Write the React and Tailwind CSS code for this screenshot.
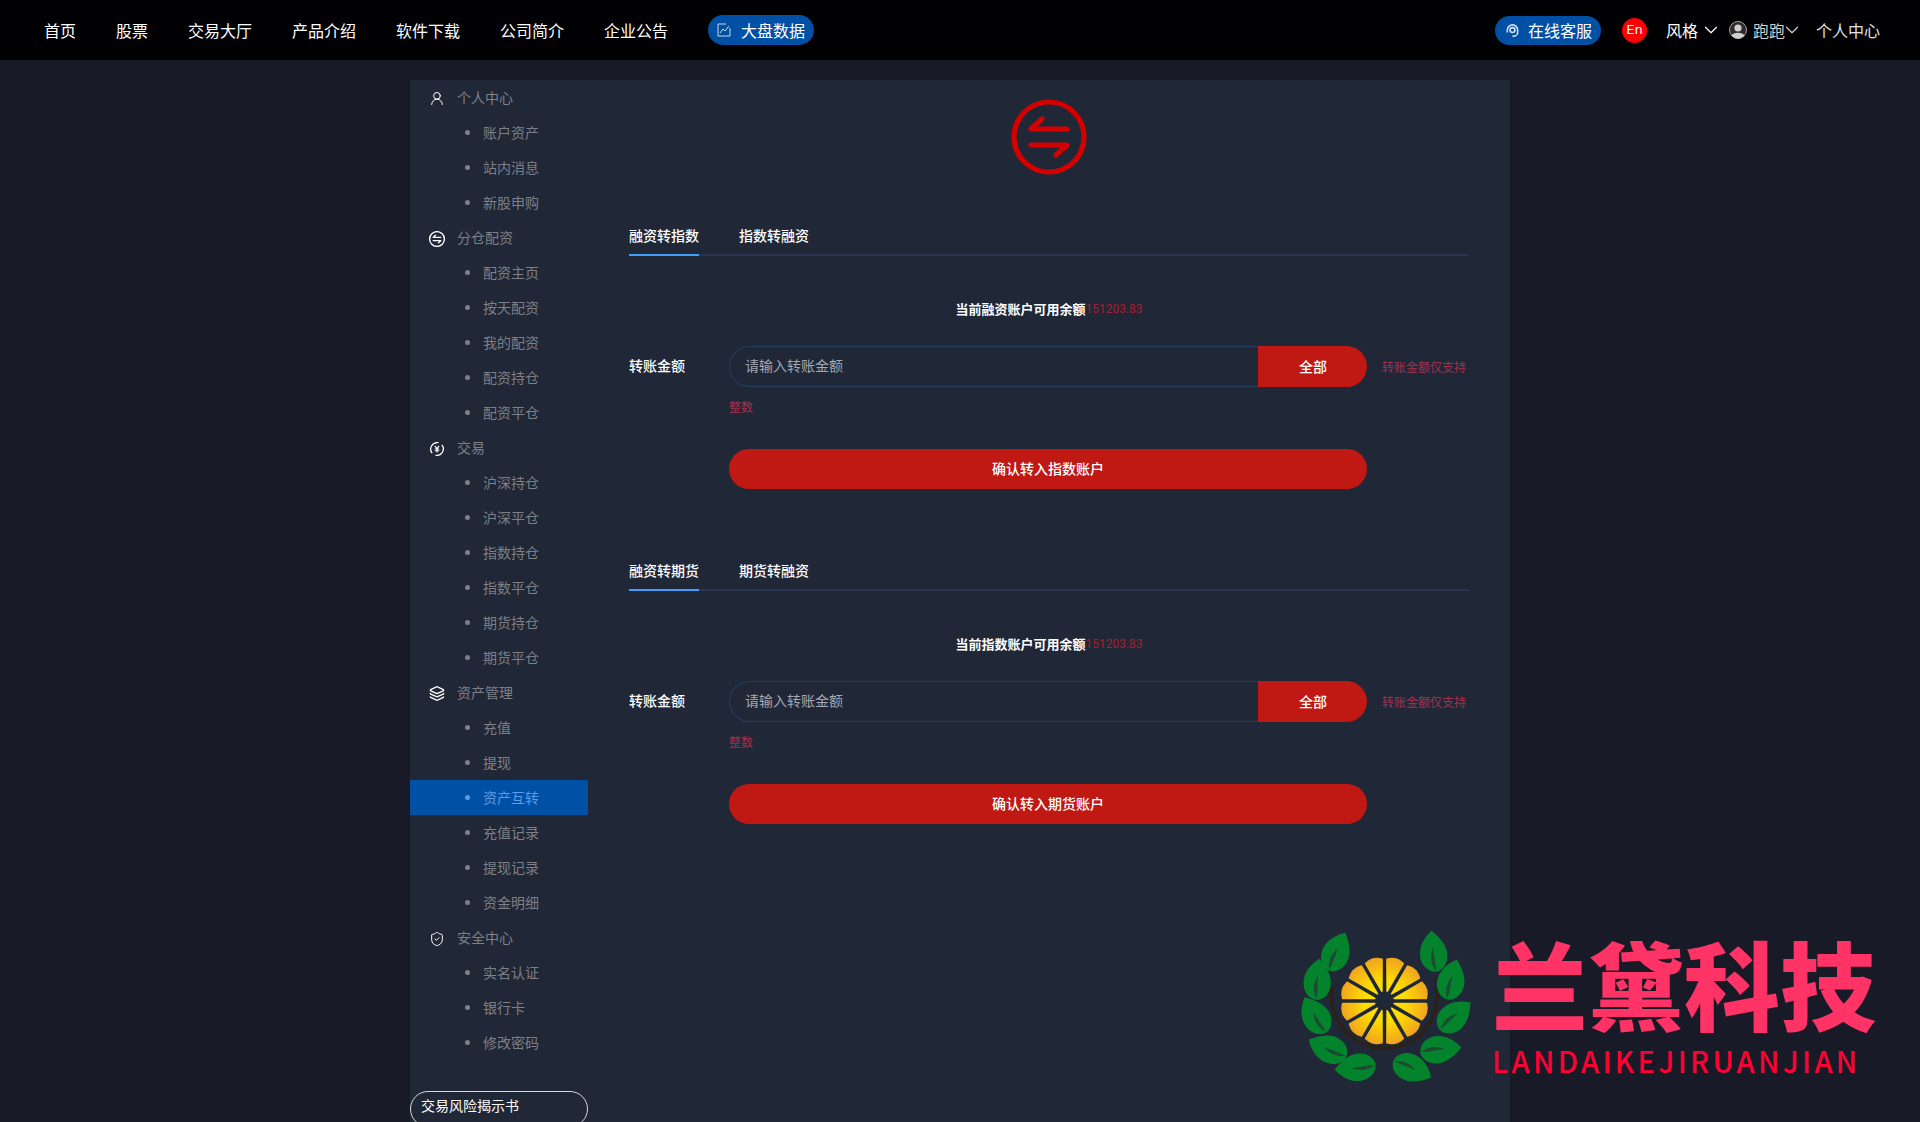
import { ChevronDown, Layers, ShieldCheck, UserRound } from 'lucide-react'

const NAV = ['首页', '股票', '交易大厅', '产品介绍', '软件下载', '公司简介', '企业公告']

const SwapIcon = ({ className = '', strokeWidth = 2 }) => (
  <svg viewBox="0 0 76 76" fill="none" stroke="currentColor" strokeLinecap="round" strokeLinejoin="round" className={className}>
    <circle cx="38" cy="38" r="35" strokeWidth={strokeWidth * 2.6} />
    <path d="M31 20 L20 30 H56 M20 46 H56 L45 56" strokeWidth={strokeWidth * 2.6} />
  </svg>
)

const YenIcon = () => (
  <svg viewBox="0 0 16 16" fill="none" stroke="currentColor" strokeWidth="1.3" className="w-4 h-4">
    <path d="M3.2 12.2 A6.5 6.5 0 0 1 9.5 1.7 M12.8 3.8 A6.5 6.5 0 0 1 6.5 14.3" />
    <path d="M5.8 4.8 L8 7.6 L10.2 4.8 M8 7.6 V11.6 M5.8 8 H10.2 M5.8 9.8 H10.2" strokeWidth="1.1" />
  </svg>
)

const SIDEBAR = [
  { title: '个人中心', icon: <UserRound size={17} strokeWidth={1.5} />, items: ['账户资产', '站内消息', '新股申购'] },
  { title: '分仓配资', icon: <SwapIcon className="w-4 h-4" strokeWidth={2.4} />, items: ['配资主页', '按天配资', '我的配资', '配资持仓', '配资平仓'] },
  { title: '交易', icon: <YenIcon />, items: ['沪深持仓', '沪深平仓', '指数持仓', '指数平仓', '期货持仓', '期货平仓'] },
  { title: '资产管理', icon: <Layers size={17} strokeWidth={2} />, items: ['充值', '提现', '资产互转', '充值记录', '提现记录', '资金明细'] },
  { title: '安全中心', icon: <ShieldCheck size={16} strokeWidth={1.5} />, items: ['实名认证', '银行卡', '修改密码'] },
]

const LEAVES = [
  [37, 20, 15], [18, 48, -5], [16, 84, -40], [29, 117, -75], [57, 136, -105],
  [134, 20, -15], [152, 48, 5], [155, 84, 40], [141, 117, 75], [113, 136, 105],
]

const Logo = () => (
  <svg viewBox="0 0 171 149" className="w-[171px] h-[149px] shrink-0 overflow-visible">
    <defs>
      <radialGradient id="orange" gradientUnits="userSpaceOnUse" cx="0" cy="0" r="45">
        <stop offset="0.45" stopColor="#ffdd00" />
        <stop offset="1" stopColor="#efa122" />
      </radialGradient>
    </defs>
    <path d="M33 56 A53 53 0 1 0 138 56" fill="none" stroke="#2d2018" strokeWidth="3.5" />
    {LEAVES.map(([x, y, r]) => (
      <g key={`${x}-${y}`} transform={`translate(${x} ${y}) rotate(${r}) scale(1.05)`}>
        <path d="M4 -20 C-8 -14 -14 -4 -13 6 C-12 14 -6 19 0 19 C8 18 13 10 13 2 C13 -7 8 -14 4 -20 Z" fill="#03842c" />
        <path d="M1 -4 C0 4 0 11 -2 18 C-5 10 -4 3 1 -4 Z" fill="#1c4a33" />
      </g>
    ))}
    <g transform="translate(85.5 69)">
      {[...Array(12)].map((_, i) => (
        <path
          key={i}
          transform={`rotate(${15 + i * 30})`}
          d="M0 -10 L-8.5 -41 Q0 -46 8.5 -41 Z"
          fill="url(#orange)"
          stroke="url(#orange)"
          strokeWidth="1.5"
          strokeLinejoin="round"
        />
      ))}
    </g>
  </svg>
)

const Watermark = () => (
  <div className="absolute left-[1299px] top-[932px] flex items-start gap-[22px]">
    <Logo />
    <div className="flex flex-col pt-[5px]">
      <div className="text-[96px] leading-[90px] font-black text-[#ff3366] whitespace-nowrap">兰黛科技</div>
      <div className="mt-[15px] text-[29px] leading-[36px] font-medium tracking-[3.4px] text-[#ff0033] whitespace-nowrap">LANDAIKEJIRUANJIAN</div>
    </div>
  </div>
)

const Transfer = ({ tabs, balanceLabel, submitLabel }) => (
  <section className="mb-[62px]">
    <div className="flex gap-[40px] h-[40px] border-b-2 border-[#2a3552] text-sm font-medium text-white">
      <div className="h-[40px] border-b-2 border-[#409eff] pt-[9px] leading-[20px]">{tabs[0]}</div>
      <div className="pt-[9px] leading-[20px]">{tabs[1]}</div>
    </div>

    <div className="mt-[43px] h-[20px] flex items-center justify-center text-[13px] font-bold text-white">
      {balanceLabel}
      <span className="text-xs font-normal text-[#a3202f] font-['Roboto',sans-serif]">151203.83</span>
    </div>

    <div className="mt-[27px] flex items-center">
      <span className="w-[100px] pb-[3px] text-sm font-medium text-white">转账金额</span>
      <div className="w-[638px] h-[41px] flex">
        <input
          readOnly
          placeholder="请输入转账金额"
          className="flex-1 min-w-0 pl-[15px] pb-[3px] rounded-l-full border border-r-0 border-[#24405f] bg-transparent text-sm outline-none placeholder:text-[#a4a9b3]"
        />
        <button className="w-[109px] pb-[2px] pl-px rounded-r-full bg-[#c01813] text-sm font-medium text-white">全部</button>
      </div>
      <span className="ml-[15px] text-xs text-[#a5324f]">转账金额仅支持</span>
    </div>

    <div className="mt-[12px] ml-[100px] h-[16px] leading-[16px] text-xs text-[#a5324f]">整数</div>

    <button className="mt-[34px] ml-[100px] w-[638px] h-[40px] pb-[2px] rounded-full bg-[#c01813] text-sm font-medium text-white">{submitLabel}</button>
  </section>
)

export default function App() {
  return (
    <div className="relative h-[1122px] overflow-hidden bg-[#181b27] font-['Noto_Sans_CJK_SC','Noto_Sans',sans-serif]">
      <header className="h-[60px] bg-[#010103] flex items-center pl-[44px] pr-[40px] text-white text-base">
        <nav className="flex items-center gap-[40px]">
          {NAV.map((n) => <a key={n}>{n}</a>)}
        </nav>
        <div className="ml-[40px] h-[30px] w-[106px] rounded-full bg-[#0050a5] flex items-center pl-[9px] gap-[10px]">
          <svg viewBox="0 0 14 14" fill="none" stroke="currentColor" strokeWidth="1" className="w-[14px] h-[14px] text-[#c8d6e8]">
            <path d="M9 1 H1 V13 H13 V5 M3 10 L6 6 L8 8 L12 3" />
          </svg>
          大盘数据
        </div>

        <div className="ml-auto flex items-center">
          <div className="h-[29px] w-[106px] rounded-full bg-[#0050a5] flex items-center pl-[10px] gap-[8px]">
            <svg viewBox="0 0 16 16" fill="none" stroke="currentColor" strokeWidth="1.7" className="w-[15px] h-[15px] text-[#d5e0ee]">
              <path d="M2.5 10 V7.5 A5.5 5.5 0 0 1 13.5 7.5 V10 M13.5 10 A4 4 0 0 1 9.5 14 H8" />
              <circle cx="8" cy="7.5" r="2.6" />
            </svg>
            在线客服
          </div>
          <div className="ml-[21px] w-[25px] h-[25px] rounded-full bg-[#ff0000] flex items-center justify-center text-[13px] font-['DejaVu_Sans',sans-serif]">En</div>
          <span className="ml-[19px]">风格</span>
          <ChevronDown size={22} strokeWidth={1.3} className="ml-[2px]" />
          <svg viewBox="0 0 18 18" className="ml-[7px] w-[18px] h-[18px]">
            <circle cx="9" cy="9" r="8.5" fill="#2c2c2c" stroke="#a99" strokeWidth="1" />
            <circle cx="9" cy="7" r="3.6" fill="#cfcfcf" />
            <path d="M2.6 14.5 C4 10.8 14 10.8 15.4 14.5 A8 8 0 0 1 2.6 14.5 Z" fill="#cfcfcf" />
          </svg>
          <span className="ml-[6px] text-[#cfcfcf]">跑跑</span>
          <ChevronDown size={22} strokeWidth={1.3} className="-ml-[4px] text-[#cfcfcf]" />
          <span className="ml-[13px] text-[#e2e2e2]">个人中心</span>
        </div>
      </header>

      <main className="mt-[20px] mx-auto w-[1100px] h-[1042px] bg-[#202737] flex">
        <aside className="w-[178px] shrink-0">
          {SIDEBAR.map((group) => (
            <div key={group.title}>
              <div className="h-[35px] flex items-center pl-[19px] gap-[12px] text-sm text-[#7d8087]">
                <span className="w-[16px] h-[16px] mt-[2px] flex items-center justify-center text-white">{group.icon}</span>
                <span className="pb-[2px]">{group.title}</span>
              </div>
              {group.items.map((item) => {
                const active = item === '资产互转'
                return (
                  <div
                    key={item}
                    className={`h-[35px] flex items-center pl-[55px] text-sm ${active ? 'bg-[#0050a5] text-[#5c9ce6]' : 'text-[#7d8087]'}`}
                  >
                    <span className={`w-[5px] h-[5px] rounded-full mr-[13px] ${active ? 'bg-[#5c9ce6]' : 'bg-[#7d8087]'}`} />
                    <span className="pb-[2px]">{item}</span>
                  </div>
                )
              })}
            </div>
          ))}
          <div className="mt-[31px] h-[36px] rounded-full border border-[#d8dadf] pl-[10px] pt-[3px] leading-[20px] text-sm text-white">交易风险揭示书</div>
        </aside>

        <div className="ml-[41px] w-[840px] pt-[19px]">
          <div className="flex justify-center mb-[41px]">
            <SwapIcon className="w-[76px] h-[76px] text-[#d40000]" />
          </div>
          <Transfer tabs={['融资转指数', '指数转融资']} balanceLabel="当前融资账户可用余额" submitLabel="确认转入指数账户" />
          <Transfer tabs={['融资转期货', '期货转融资']} balanceLabel="当前指数账户可用余额" submitLabel="确认转入期货账户" />
        </div>
      </main>

      <Watermark />
    </div>
  )
}
